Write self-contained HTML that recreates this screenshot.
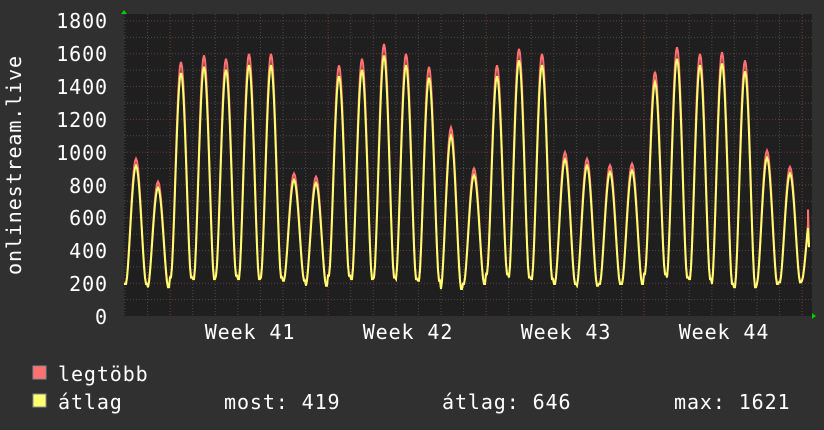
<!DOCTYPE html>
<html><head><meta charset="utf-8"><style>
html,body{margin:0;padding:0;background:#303030;width:824px;height:430px;overflow:hidden}
svg{display:block}
text{font-family:"DejaVu Sans Mono","Liberation Mono",monospace;fill:#fff;letter-spacing:0.9px}
</style></head><body>
<svg id="s" width="824" height="430" xmlns="http://www.w3.org/2000/svg">
<rect width="824" height="430" fill="#303030"/>
<rect x="124" y="14" width="688" height="302" fill="#1f1f1f"/>
<g id="grid"></g>
<g font-size="20" text-anchor="end">
<text x="108" y="28">1800</text><text x="108" y="61">1600</text><text x="108" y="94">1400</text>
<text x="108" y="127">1200</text><text x="108" y="160">1000</text><text x="108" y="193">800</text>
<text x="108" y="225">600</text><text x="108" y="258">400</text><text x="108" y="291">200</text>
<text x="108" y="324">0</text></g>
<text font-size="20" transform="translate(21,275) rotate(-90)">onlinestream.live</text>
<g font-size="20" text-anchor="middle">
<text x="250" y="339">Week 41</text><text x="408" y="339">Week 42</text>
<text x="566" y="339">Week 43</text><text x="724" y="339">Week 44</text></g>
<path id="mx" fill="none" stroke="#ff7070" stroke-width="2"/>
<path id="av" fill="none" stroke="#ffff70" stroke-width="2"/>
<path d="M124,10 L121,14 L127,14Z M816,316 L812,313 L812,319Z" fill="#0c0"/>
<rect x="33" y="366" width="13" height="13" fill="#ff7070" stroke="#888"/>
<rect x="33" y="394" width="13" height="13" fill="#ffff70" stroke="#888"/>
<g font-size="20"><text x="58" y="381">legtöbb</text><text x="58" y="409">átlag</text>
<text x="224" y="409">most: 419</text><text x="442" y="409">átlag: 646</text><text x="674" y="409">max: 1621</text></g>
</svg>
<script>
var g=document.getElementById('grid'),h='';
function Y(v){return 316-v*(295/1800);}
for(var v=100;v<=1800;v+=100){var y=Y(v);h+='<line x1="124" x2="812" y1="'+y+'" y2="'+y+'" stroke="'+(v%200==0?'#6a3a3a':'#4a4a4a')+'" stroke-dasharray="1,2"/>';}
for(var x=125;x<812;x+=22.57){var red=Math.abs(((x-170)%158+158)%158)<2||Math.abs(((x-170)%158+158)%158-158)<2;
h+='<line y1="14" y2="316" x1="'+x+'" x2="'+x+'" stroke="'+(red?'#7a3a3a':'#4a4a4a')+'" stroke-dasharray="1,2"/>';}
g.innerHTML=h;
var P=[[136,960],[158,820],[181,1550],[204,1590],[226,1570],[249,1600],[271,1600],[294,870],[316,850],[339,1530],[362,1570],[384,1660],[406,1600],[429,1520],[451,1150],[474,900],[497,1530],[519,1630],[542,1600],[565,1000],[587,960],[610,920],[632,930],[655,1490],[677,1640],[700,1600],[722,1610],[745,1560],[767,1010],[790,910],[812,700]];
var mins=[200,180,240,230,250,230,240,220,190,250,230,240,230,220,170,200,260,240,230,200,190,200,200,260,240,230,200,180,200,210,220];
var a='',b='';
for(var x=124;x<=808;x++){
 var best=0;for(var i=0;i<P.length;i++){if(Math.abs(P[i][0]-x)<Math.abs(P[best][0]-x))best=i;}
 var d=x-P[best][0],pk=P[best][1],mn=mins[best];
 var f=Math.max(0,Math.cos(Math.PI*d/20));f=Math.pow(f,1.6);
 var m=mn+(pk-mn)*f, av=mn+(pk*0.96-mn)*f-5;
 a+=(x==124?'M':'L')+x+','+Y(m).toFixed(1);b+=(x==124?'M':'L')+x+','+Y(av).toFixed(1);
}
a+='L808,'+Y(650)+'L809,'+Y(420);b+='L809,'+Y(420);
document.getElementById('mx').setAttribute('d',a);document.getElementById('av').setAttribute('d',b);
</script>
</body></html>
